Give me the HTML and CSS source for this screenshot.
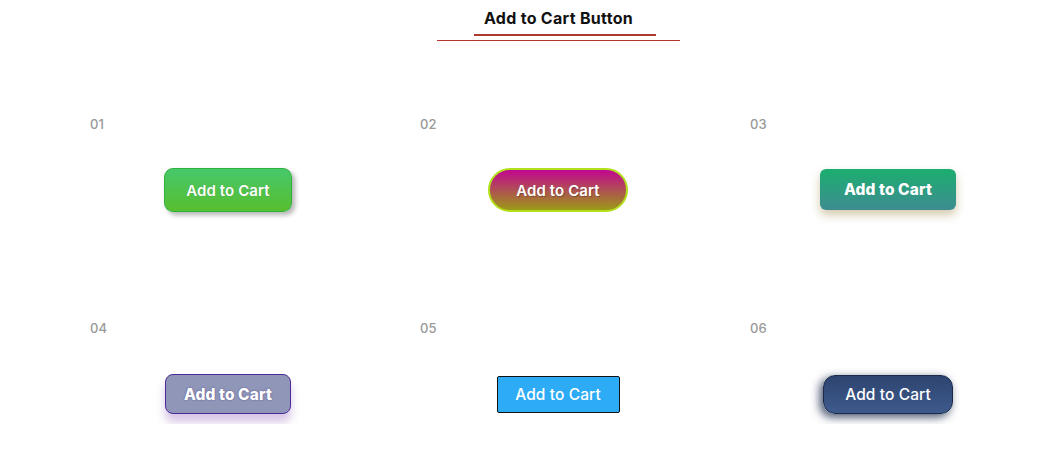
FILE: index.html
```html
<!DOCTYPE html>
<html lang="en">
<head>
<meta charset="utf-8">
<title>Add to Cart Button</title>
<link rel="stylesheet" href="styles.css">
</head>
<body>
<div class="page">
  <header class="head">
    <h1 class="title">Add to Cart Button</h1>
    <div class="rule"><span class="rule-bar"></span></div>
  </header>
  <main class="grid">
    <section class="cell">
      <div class="num">01</div>
      <div class="stage"><button class="btn b1">Add to Cart</button></div>
    </section>
    <section class="cell">
      <div class="num">02</div>
      <div class="stage"><button class="btn b2">Add to Cart</button></div>
    </section>
    <section class="cell">
      <div class="num">03</div>
      <div class="stage"><button class="btn b3">Add to Cart</button></div>
    </section>
    <section class="cell">
      <div class="num">04</div>
      <div class="stage"><button class="btn b4">Add to Cart</button></div>
    </section>
    <section class="cell">
      <div class="num">05</div>
      <div class="stage"><button class="btn b5">Add to Cart</button></div>
    </section>
    <section class="cell">
      <div class="num">06</div>
      <div class="stage"><button class="btn b6">Add to Cart</button></div>
    </section>
  </main>
</div>
</body>
</html>
```

FILE: styles.css
```css
html, body {
  margin: 0;
  padding: 0;
  background: #fff;
  overflow: hidden;
  font-family: Inter, "Open Sans", sans-serif;
}
.page {
  width: 1045px;
}
.head {
  display: flex;
  flex-direction: column;
  align-items: center;
  padding: 8px 0 0 72px;
}
.title {
  margin: 0;
  font-size: 16px;
  font-weight: 700;
  line-height: 20px;
  color: #111;
  letter-spacing: 0.3px;
}
.rule {
  margin-top: 6px;
  width: 243px;
  height: 6px;
  border-bottom: 1px solid #b8322a;
  display: flex;
  justify-content: center;
}
.rule-bar {
  margin-left: 12px;
  width: 182px;
  height: 2px;
  background: #b03a30;
}
.grid {
  display: grid;
  grid-template-columns: 330px 330px 322px;
  row-gap: 84px;
  padding-left: 63px;
  margin-top: 59px;
}
.cell {
  padding-top: 16px;
}
.num {
  padding-left: 27px;
  font-size: 13px;
  line-height: 16px;
  font-weight: 500;
  color: #999;
}
.stage {
  margin-top: 28px;
  height: 60px;
  display: flex;
  align-items: center;
  justify-content: center;
}
.cell:nth-child(3n) .stage {
  padding-left: 8px;
}
.btn {
  font-family: Inter, "Open Sans", sans-serif;
  font-size: 15px;
  font-weight: 600;
  color: #fff;
  padding: 0;
  box-sizing: border-box;
  cursor: pointer;
  letter-spacing: 0.1px;
}
.b1 {
  width: 128px;
  height: 44px;
  border: 1px solid #2fb23c;
  border-radius: 9px;
  background: linear-gradient(#46c86c, #58be2e);
  box-shadow: 3px 3px 5px rgba(0, 0, 0, 0.3);
  text-shadow: 0 0 1px rgba(0, 0, 0, 0.2);
}
.b2 {
  width: 140px;
  height: 44px;
  border: 2px solid #b2e01c;
  border-radius: 22px;
  background: linear-gradient(#c20690, #9c9a16);
  text-shadow: 1px 1px 1px rgba(0, 0, 0, 0.25);
}
.b3 {
  width: 136px;
  height: 41px;
  border: 0;
  border-radius: 6px;
  background: linear-gradient(#1cae70, #3d8c90);
  box-shadow: 0 5px 10px rgba(130, 100, 20, 0.35);
  font-weight: 800;
  font-size: 15.5px;
  margin-top: -1px;
}
.b4 {
  width: 126px;
  height: 40px;
  border: 1px solid #4b2b9a;
  border-radius: 8px;
  background: #8f96b8;
  box-shadow: 0 8px 10px rgba(120, 60, 170, 0.3);
  font-weight: 800;
  font-size: 15.5px;
  text-shadow: 0 0 2px rgba(60, 40, 120, 0.6);
}
.b5 {
  width: 123px;
  height: 37px;
  border: 1px solid #111;
  border-radius: 2px;
  background: #2eabf5;
  font-weight: 500;
  font-size: 15.5px;
}
.b6 {
  width: 130px;
  height: 39px;
  border: 1px solid #1b2a48;
  border-radius: 12px;
  background: linear-gradient(#2e4470, #3e5a8c);
  box-shadow: -3px 3px 10px rgba(20, 35, 70, 0.8);
  font-weight: 500;
  font-size: 15.5px;
}
```
